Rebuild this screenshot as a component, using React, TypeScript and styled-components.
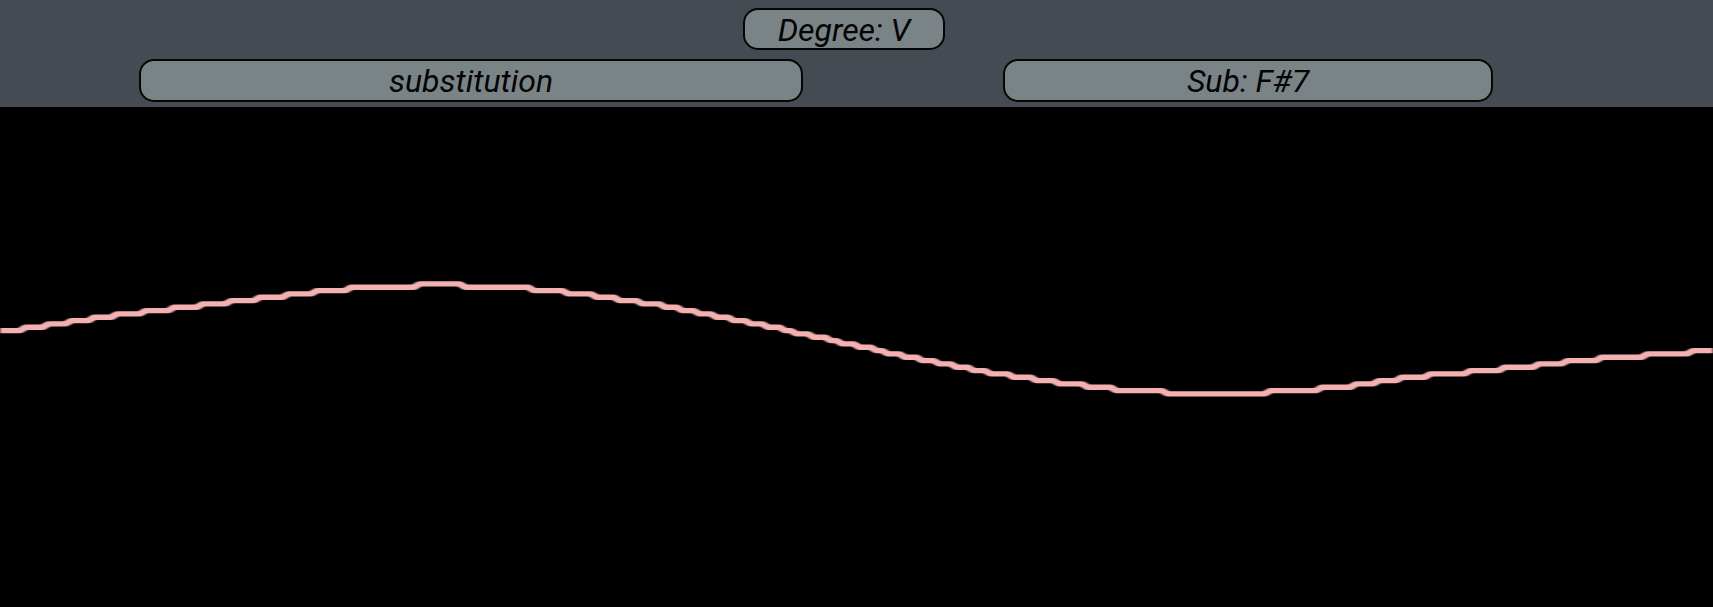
import { useMemo } from "react";
import styled, { createGlobalStyle } from "styled-components";

const GlobalStyle = createGlobalStyle`
  html, body {
    margin: 0;
    padding: 0;
    background: #000;
    overflow: hidden;
  }
  body {
    font-family: Roboto, "Liberation Sans", sans-serif;
  }
`;

const Page = styled.div`
  display: flex;
  flex-direction: column;
  width: 100%;
  height: 607px;
`;

const Header = styled.header`
  display: flex;
  flex-direction: column;
  gap: 9px;
  height: 107px;
  box-sizing: border-box;
  padding-top: 8px;
  background: #444b52;
`;

const Row = styled.div<{ $left: number; $gap?: number }>`
  display: flex;
  align-items: center;
  gap: ${(p) => p.$gap ?? 0}px;
  padding-left: ${(p) => p.$left}px;
`;

const Pill = styled.div<{ $width: number; $height: number }>`
  display: flex;
  align-items: center;
  justify-content: center;
  box-sizing: border-box;
  width: ${(p) => p.$width}px;
  height: ${(p) => p.$height}px;
  border: 2px solid #050505;
  border-radius: 15px;
  background: #7a8487;
  color: #050505;
  font-family: Roboto, "Liberation Sans", sans-serif;
  font-style: italic;
  font-size: 32px;
  line-height: 1;
  padding-top: 1px;
`;

const Scope = styled.div`
  flex: 1;
  background: #000;
`;

const WaveSvg = styled.svg`
  display: block;
  width: 100%;
  height: 500px;
`;

// sine through the measured crest (439, 284) and trough (1217, 392)
const sine = (x: number) => 338 - 54 * Math.cos((Math.PI * (x - 439)) / 778);

// measured ends, sine in between
const PTS: [number, number][] = [[0, 331], [100, 316], [200, 304]];
for (let x = 260; x <= 1420; x += 40) PTS.push([x, sine(x)]);
PTS.push([1500, 368], [1584, 359], [1713, 349]);

function traceY(x: number) {
  const n = PTS.length;
  let k = 0;
  while (k < n - 2 && x > PTS[k + 1][0]) k++;
  const [x0, y0] = PTS[k];
  const [x1, y1] = PTS[k + 1];
  const slope = (i: number) => {
    const a = PTS[Math.max(0, i - 1)];
    const b = PTS[Math.min(n - 1, i + 1)];
    return (b[1] - a[1]) / (b[0] - a[0]);
  };
  const h = x1 - x0;
  const t = (x - x0) / h;
  const m0 = slope(k) * h;
  const m1 = slope(k + 1) * h;
  const t2 = t * t;
  const t3 = t2 * t;
  return (
    (2 * t3 - 3 * t2 + 1) * y0 +
    (t3 - 2 * t2 + t) * m0 +
    (-2 * t3 + 3 * t2) * y1 +
    (t3 - t2) * m1
  );
}

// the scope is a 300x150 buffer stretched over the panel, hence the steps
function Waveform() {
  const d = useMemo(() => {
    const cols = 300;
    const off = 0.325;
    const pts: string[] = [];
    for (let i = 0; i < cols; i++) {
      const X = i + 0.5;
      const y = traceY((X * 1713) / cols);
      const Y = ((y - 107) * 150) / 500;
      const Yq = Math.round(Y + off) - off + 0.4;
      if (i === 0) pts.push(`M0 ${Yq.toFixed(3)}`);
      pts.push(`L${X} ${Yq.toFixed(3)}`);
      if (i === cols - 1) pts.push(`L${cols} ${Yq.toFixed(3)}`);
    }
    return pts.join(" ");
  }, []);

  return (
    <WaveSvg viewBox="0 0 300 150" preserveAspectRatio="none">
      <defs>
        <filter id="soft" x="-5%" y="-50%" width="110%" height="200%">
          <feGaussianBlur stdDeviation="0.3 0.22" />
        </filter>
      </defs>
      <path
        d={d}
        fill="none"
        stroke="#f4b1b1"
        strokeWidth={1.6}
        strokeLinejoin="round"
        filter="url(#soft)"
      />
    </WaveSvg>
  );
}

export default function App() {
  return (
    <>
      <GlobalStyle />
      <Page>
        <Header>
          <Row $left={743}>
            <Pill $width={202} $height={42}>Degree: V</Pill>
          </Row>
          <Row $left={139} $gap={200}>
            <Pill $width={664} $height={43}>substitution</Pill>
            <Pill $width={490} $height={43}>Sub: F#7</Pill>
          </Row>
        </Header>
        <Scope>
          <Waveform />
        </Scope>
      </Page>
    </>
  );
}
